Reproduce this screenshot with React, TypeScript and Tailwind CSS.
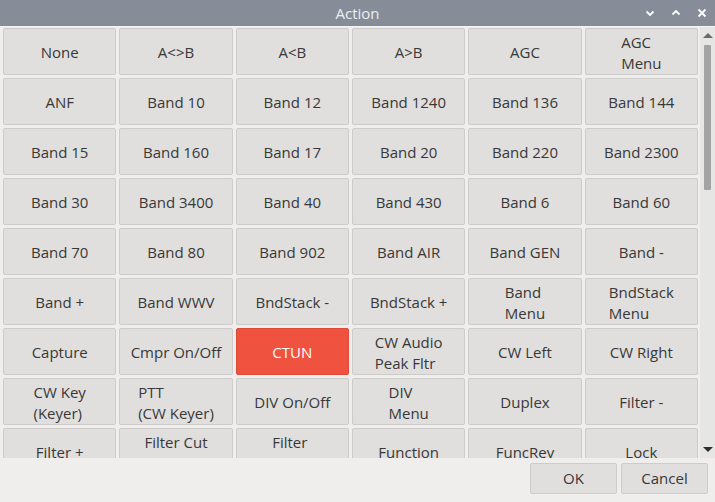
import { useState } from 'react';

const actions: string[] = [
  'None', 'A<>B', 'A<B', 'A>B', 'AGC', 'AGC\nMenu',
  'ANF', 'Band 10', 'Band 12', 'Band 1240', 'Band 136', 'Band 144',
  'Band 15', 'Band 160', 'Band 17', 'Band 20', 'Band 220', 'Band 2300',
  'Band 30', 'Band 3400', 'Band 40', 'Band 430', 'Band 6', 'Band 60',
  'Band 70', 'Band 80', 'Band 902', 'Band AIR', 'Band GEN', 'Band -',
  'Band +', 'Band WWV', 'BndStack -', 'BndStack +', 'Band\nMenu', 'BndStack\nMenu',
  'Capture', 'Cmpr On/Off', 'CTUN', 'CW Audio\nPeak Fltr', 'CW Left', 'CW Right',
  'CW Key\n(Keyer)', 'PTT\n(CW Keyer)', 'DIV On/Off', 'DIV\nMenu', 'Duplex', 'Filter -',
  'Filter +', 'Filter Cut\nDefault', 'Filter\nMenu', 'Function', 'FuncRev', 'Lock',
];

function ActionButton({ label, selected, onClick }: { label: string; selected: boolean; onClick: () => void }) {
  const lines = label.split('\n');
  return (
    <button
      onClick={onClick}
      className={`h-[47px] rounded-[2px] border flex items-center justify-center ${
        selected ? 'bg-[#f05240] border-[#e04a38] text-white' : 'bg-[#e0dfdd] border-[#cdccca] text-[#383838]'
      }`}
    >
      <span className="text-left leading-[21px] pt-[2px]">
        {lines.map((l, i) => (
          <span key={i} className="block whitespace-pre">{l}</span>
        ))}
      </span>
    </button>
  );
}

export default function App() {
  const [selected, setSelected] = useState('CTUN');

  return (
    <div className="w-[715px] h-[502px] flex flex-col bg-[#efeeec] overflow-hidden font-['Open_Sans',sans-serif] text-[15px]">
      {/* title bar */}
      <div className="h-[26px] bg-[#878d98] flex items-center relative shrink-0">
        <div className="flex-1 text-center text-[#eceef0] text-[15px]">Action</div>
        <div className="absolute right-[7px] top-0 h-[26px] flex items-center gap-[14px] text-white">
          <svg width="12" height="12" viewBox="0 0 12 12">
            <path d="M2.5 4.5 L6 8 L9.5 4.5" stroke="currentColor" strokeWidth="1.8" fill="none" />
          </svg>
          <svg width="12" height="12" viewBox="0 0 12 12">
            <path d="M2.5 7.5 L6 4 L9.5 7.5" stroke="currentColor" strokeWidth="1.8" fill="none" />
          </svg>
          <svg width="12" height="12" viewBox="0 0 12 12">
            <path d="M2.5 2.5 L9.5 9.5 M9.5 2.5 L2.5 9.5" stroke="currentColor" strokeWidth="1.8" fill="none" />
          </svg>
        </div>
      </div>

      {/* grid + scrollbar */}
      <div className="h-[432px] flex overflow-hidden border-t border-[#f4f4f2]">
        <div className="flex-1 overflow-hidden pl-[3px] pr-[2px] pt-[1px]">
          <div className="grid grid-cols-6 gap-[3px]">
            {actions.map((a) => (
              <ActionButton key={a} label={a} selected={a === selected} onClick={() => setSelected(a)} />
            ))}
          </div>
        </div>
        <div className="w-[15px] bg-[#e6e6e4] flex flex-col items-center relative">
          <div className="pt-[6px] h-[16px]">
            <div className="w-0 h-0 border-l-[5px] border-r-[5px] border-b-[5px] border-l-transparent border-r-transparent border-b-[#6a6a6a]" />
          </div>
          <div className="mt-[2px] w-[7px] h-[145px] bg-[#a3a3a3] rounded-[1px]" />
          <div className="absolute bottom-[6px]">
            <div className="w-0 h-0 border-l-[5px] border-r-[5px] border-t-[5px] border-l-transparent border-r-transparent border-t-[#2e2e2e]" />
          </div>
        </div>
      </div>

      {/* bottom buttons */}
      <div className="flex-1 flex items-start justify-end gap-[4px] pt-[5px] pr-[7px]">
        <button className="w-[87px] h-[31px] rounded-[2px] border border-[#cdccca] bg-[#e0dfdd] text-[#383838] text-[15px]">OK</button>
        <button className="w-[87px] h-[31px] rounded-[2px] border border-[#cdccca] bg-[#e0dfdd] text-[#383838] text-[15px]">Cancel</button>
      </div>
    </div>
  );
}
